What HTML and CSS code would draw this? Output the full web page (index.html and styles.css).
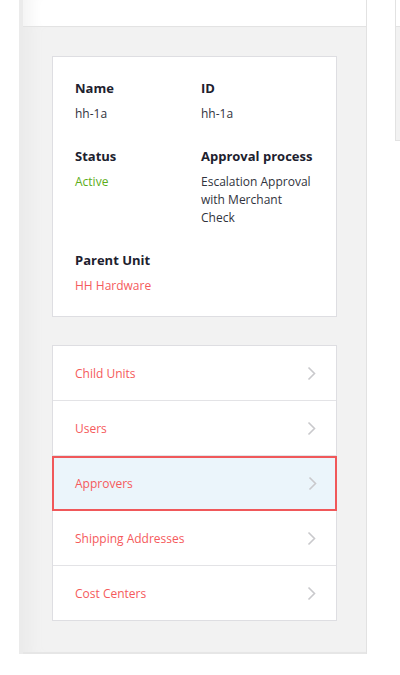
FILE: index.html
```html
<!DOCTYPE html>
<html>
<head>
<meta charset="utf-8">
<link rel="stylesheet" href="styles.css">
</head>
<body>
<div class="page">
  <div class="panel">
    <div class="panel-top"></div>
    <div class="panel-body">
      <div class="card details">
        <div class="field">
          <div class="label">Name</div>
          <div class="value">hh-1a</div>
        </div>
        <div class="field">
          <div class="label">ID</div>
          <div class="value">hh-1a</div>
        </div>
        <div class="field">
          <div class="label">Status</div>
          <div class="value active">Active</div>
        </div>
        <div class="field">
          <div class="label">Approval process</div>
          <div class="value">Escalation Approval with Merchant Check</div>
        </div>
        <div class="field">
          <div class="label">Parent Unit</div>
          <div class="value link">HH Hardware</div>
        </div>
      </div>
      <div class="card links">
        <a class="link-row">Child Units<svg class="chev" viewBox="0 0 9 15"><path d="M1.5 1.5 L7.5 7.5 L1.5 13.5"/></svg></a>
        <a class="link-row">Users<svg class="chev" viewBox="0 0 9 15"><path d="M1.5 1.5 L7.5 7.5 L1.5 13.5"/></svg></a>
        <a class="link-row selected">Approvers<svg class="chev" viewBox="0 0 9 15"><path d="M1.5 1.5 L7.5 7.5 L1.5 13.5"/></svg></a>
        <a class="link-row">Shipping Addresses<svg class="chev" viewBox="0 0 9 15"><path d="M1.5 1.5 L7.5 7.5 L1.5 13.5"/></svg></a>
        <a class="link-row">Cost Centers<svg class="chev" viewBox="0 0 9 15"><path d="M1.5 1.5 L7.5 7.5 L1.5 13.5"/></svg></a>
      </div>
    </div>
  </div>
  <div class="side">
    <div class="side-top"></div>
    <div class="side-body"></div>
  </div>
</div>
</body>
</html>
```

FILE: styles.css
```css
html, body {
  margin: 0;
  padding: 0;
  background: #ffffff;
  font-family: "Open Sans", "Liberation Sans", sans-serif;
}

.page {
  display: flex;
  align-items: flex-start;
  height: 675px;
}

.panel {
  margin-left: 19px;
  width: 348px;
  box-sizing: border-box;
  border-right: 1px solid #e2e2e2;
  border-left: 4px solid #ebebeb;
}

.panel-top {
  height: 26px;
  background: #ffffff;
  border-bottom: 1px solid #e3e3e3;
  box-shadow: inset 18px 0 14px -10px #f4f4f4;
}

.panel-body {
  background: #f2f2f2;
  padding: 29px 29px 31px 29px;
  border-bottom: 2px solid #e6e6e6;
  box-shadow: inset 18px 0 14px -10px #ebebeb;
}

.card {
  background: #ffffff;
  border: 1px solid #dedee2;
}

.details {
  display: grid;
  grid-template-columns: 126px 1fr;
  row-gap: 23px;
  padding: 21px 22px 21px 22px;
}

.label {
  font-size: 13px;
  font-weight: 700;
  line-height: 20px;
  color: #1d212e;
  margin-bottom: 7px;
}

.value {
  font-size: 12px;
  line-height: 18px;
  color: #30333d;
}

.value.active {
  color: #5cad1a;
}

.value.link {
  color: #f55a5c;
}

.links {
  margin-top: 28px;
  display: flex;
  flex-direction: column;
}

.link-row {
  display: flex;
  align-items: center;
  justify-content: space-between;
  height: 54px;
  padding: 0 20px 0 22px;
  font-size: 12px;
  color: #f55a5c;
  border-bottom: 1px solid #e3e3e6;
}

.link-row:last-child {
  border-bottom: none;
}

.link-row.selected {
  background: #ebf5fb;
  border: 2px solid #f0585a;
  height: 51px;
  margin: 0 -1px;
  padding: 0 18px 0 21px;
}

.chev {
  width: 9px;
  height: 15px;
  fill: none;
  stroke: #c9c9cc;
  stroke-width: 1.6;
}

.side {
  margin-left: 28px;
  flex: 1;
  border-left: 1px solid #e2e2e2;
}

.side-top {
  height: 26px;
  background: #ffffff;
  border-bottom: 1px solid #e3e3e3;
}

.side-body {
  height: 113px;
  background: #f2f2f2;
  border-bottom: 1px solid #e2e2e2;
}
```
